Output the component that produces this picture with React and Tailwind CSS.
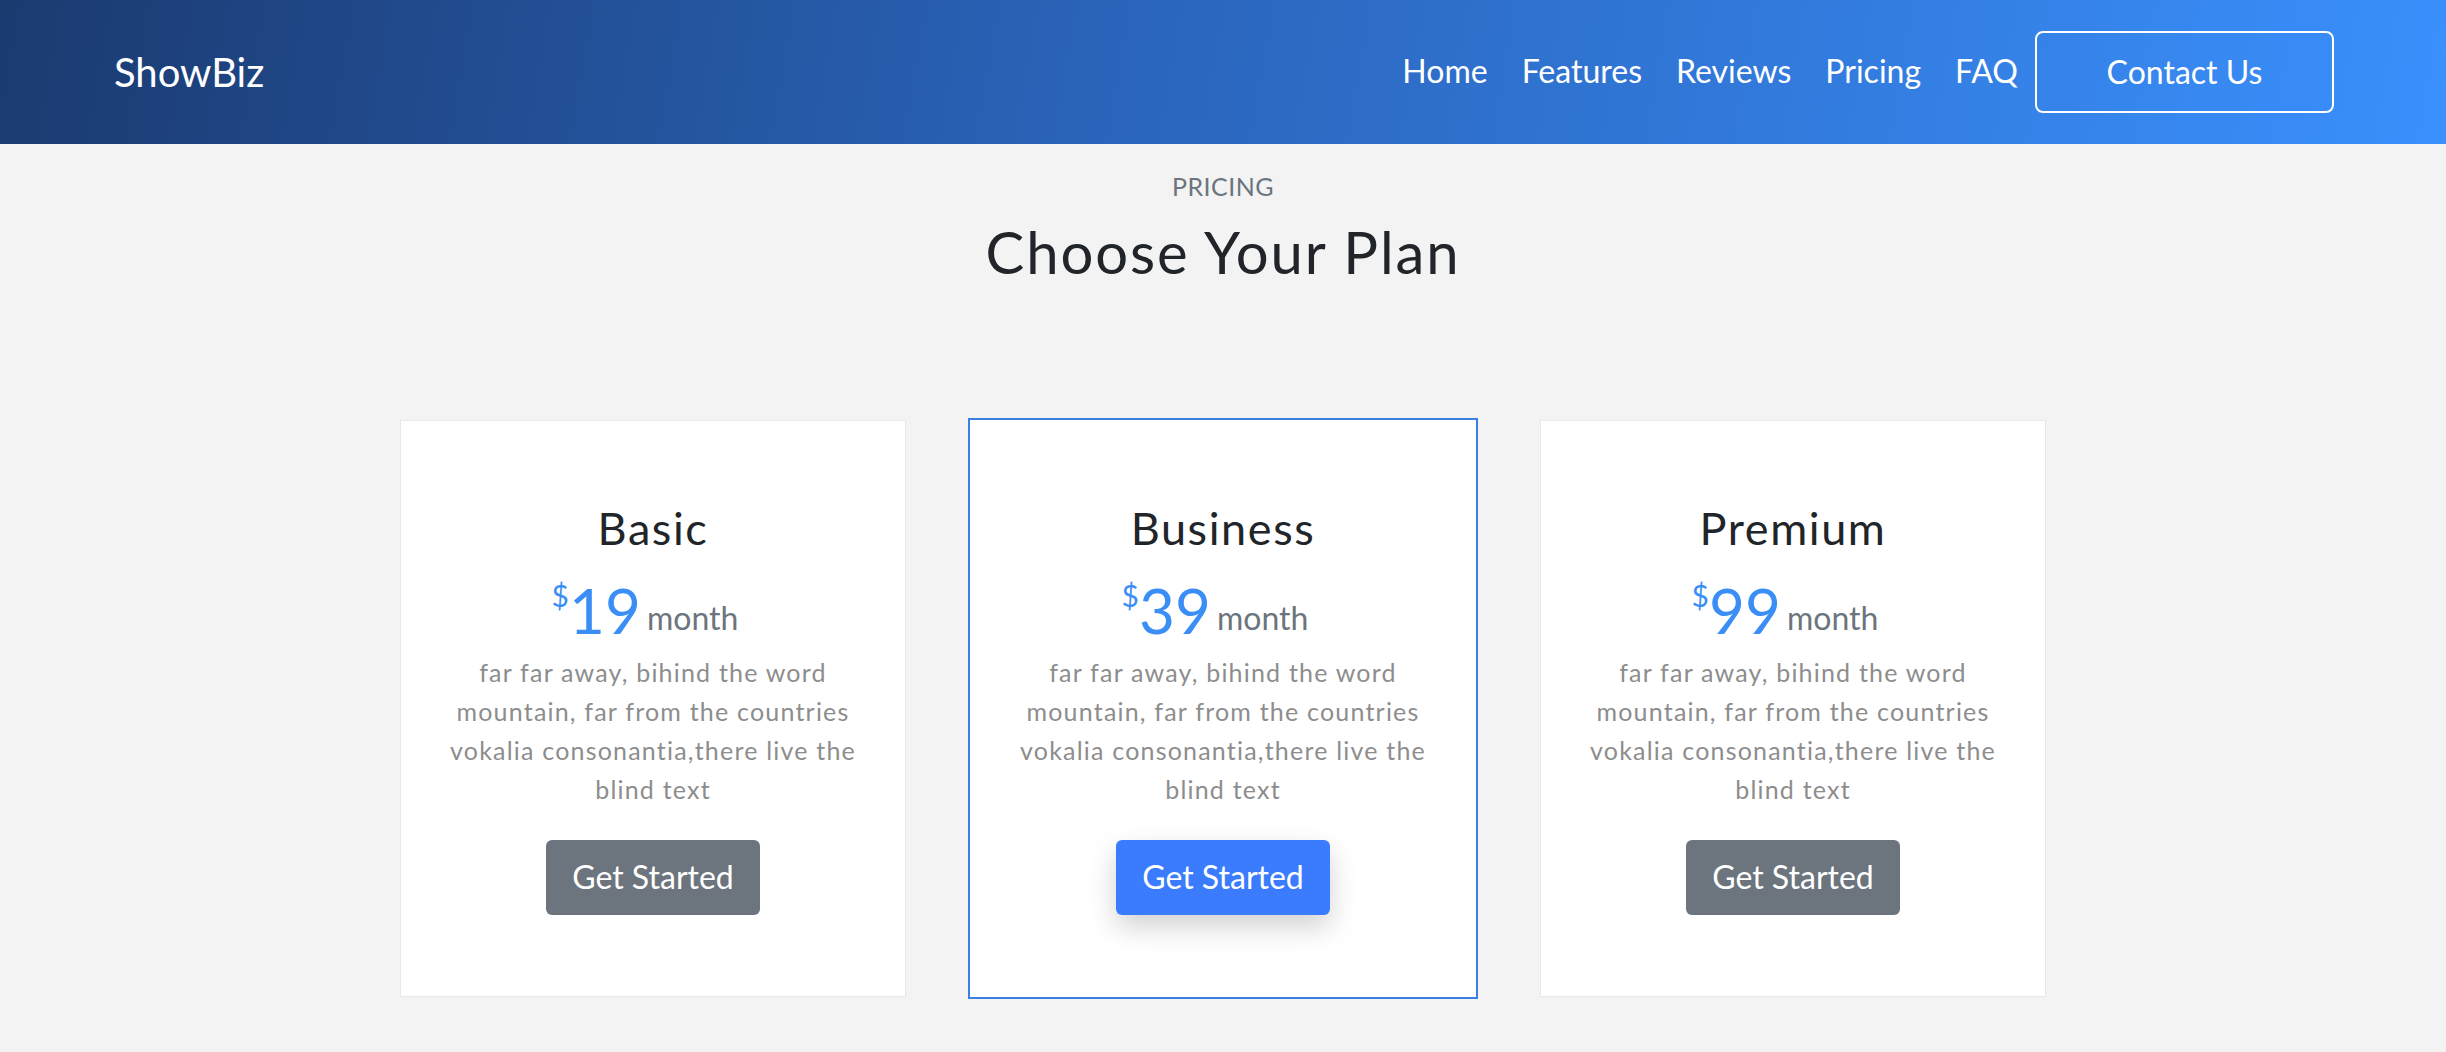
import React from "react";

const plans = [
  { name: "Basic", price: "19", featured: false },
  { name: "Business", price: "39", featured: true },
  { name: "Premium", price: "99", featured: false },
];

function PlanCard({ plan }) {
  const base = plan.featured
    ? "w-[510px] border-2 border-[#3a80e4] pt-[81px] pb-[82px] px-[35px]"
    : "w-[506px] border border-[#e8e8e8] pt-[80px] pb-[81px] px-[34px]";
  return (
    <div className={`${base} bg-white flex flex-col items-center text-center`}>
      <h3 className="text-[45px] leading-[1.2] tracking-[1.6px] text-[#212529] font-normal">{plan.name}</h3>
      <div className="mt-[18px] leading-[1.2] whitespace-nowrap pr-[16px]">
        <span className="text-[62px] text-[#3b8ef5]">
          <sup className="text-[30px] align-[12px] leading-none">$</sup>
          {plan.price}
        </span>
        <span className="text-[32px] text-[#6c757d] ml-[6px] align-[4px]">month</span>
      </div>
      <p className="mt-[6px] text-[25px] leading-[39px] tracking-[1.2px] text-[#8d8d8d]">
        far far away, bihind the word mountain, far from the countries vokalia consonantia,there live the blind text
      </p>
      <button
        className={`mt-[31px] h-[75px] px-[26px] rounded-[6px] text-[32px] leading-none text-white flex items-center ${
          plan.featured
            ? "bg-[#3a7cfd] shadow-[0_12px_28px_rgba(0,0,0,0.18)]"
            : "bg-[#6c757d]"
        }`}
      >
        Get Started
      </button>
    </div>
  );
}

export default function App() {
  return (
    <div className="min-h-screen bg-[#f3f3f3] font-['Lato','Open_Sans',sans-serif]">
      <header className="h-[144px] flex items-center justify-between pl-[114px] pr-[112px] bg-[linear-gradient(100deg,#1b3a70_0%,#2a64ba_45%,#3a90fd_100%)]">
        <div className="text-[40px] text-white leading-none">ShowBiz</div>
        <nav className="flex items-center">
          {["Home", "Features", "Reviews", "Pricing", "FAQ"].map((l) => (
            <a key={l} className="px-[17px] text-[32px] text-white leading-[1.5] -mt-[2px]">
              {l}
            </a>
          ))}
          <a className="w-[299px] h-[82px] border-2 border-white rounded-[8px] flex items-center justify-center text-[32px] text-white">
            Contact Us
          </a>
        </nav>
      </header>
      <section className="flex flex-col items-center pt-[24px] pb-[55px]">
        <div className="text-[25px] leading-[37px] tracking-[0.5px] text-[#6c757d]">PRICING</div>
        <h2 className="mt-[12px] text-[58px] leading-[1.2] tracking-[1.9px] text-[#212529] font-normal">
          Choose Your Plan
        </h2>
        <div className="mt-[131px] flex items-center justify-center gap-[62px]">
          {plans.map((p) => (
            <PlanCard key={p.name} plan={p} />
          ))}
        </div>
      </section>
    </div>
  );
}
